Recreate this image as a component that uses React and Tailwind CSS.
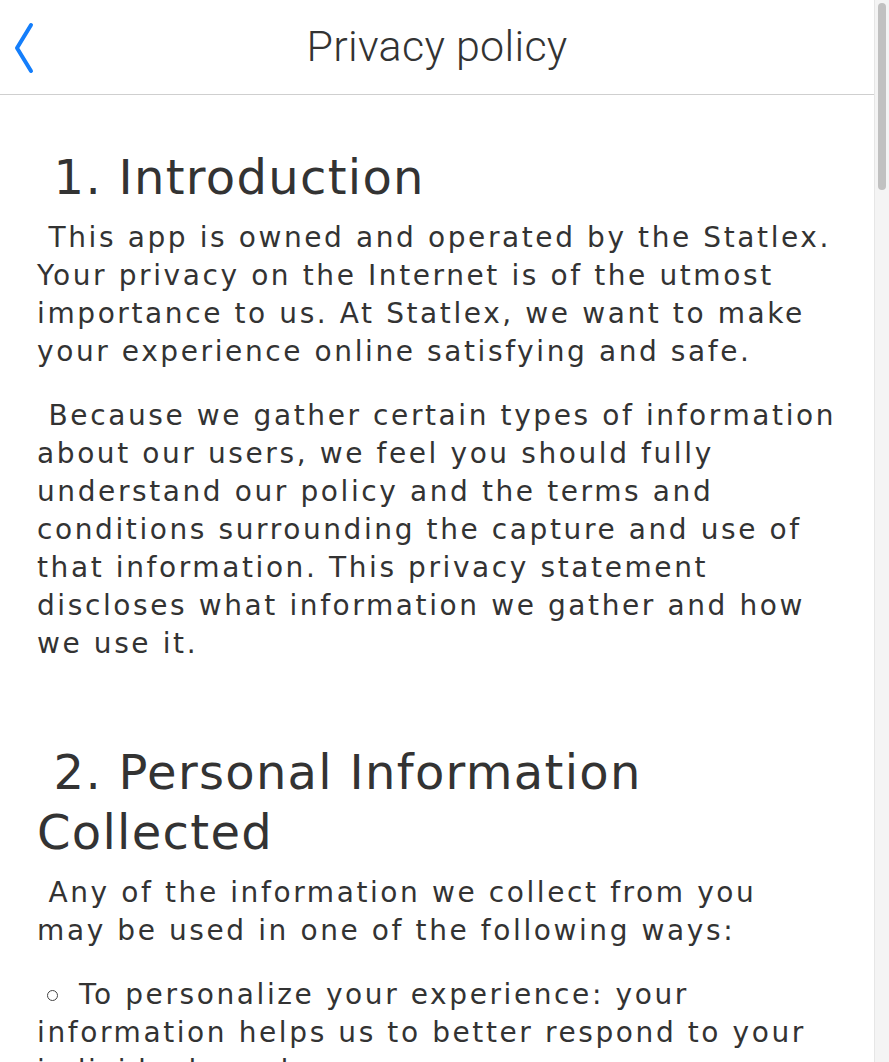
import React from 'react';

// Fake page scrollbar on the right edge
const Scrollbar = () => (
  <div className="w-[15px] h-full bg-[#f4f4f4] border-l border-[#e6e6e6] flex justify-center pt-[3px]">
    <div className="w-[8px] h-[187px] rounded-full bg-[#c1c1c1]" />
  </div>
);

const BackChevron = () => (
  <svg width="24" height="54" viewBox="0 0 24 54" fill="none">
    <path d="M17 4 L3 27 L17 50" stroke="#147EFB" strokeWidth="4" strokeLinecap="round" strokeLinejoin="round" />
  </svg>
);

const Heading = ({ children, className = '' }) => (
  <h2 className={`text-[48px] leading-[60px] tracking-[1.3px] text-[#333] ${className}`}>{'\u00a0'}{children}</h2>
);

const Para = ({ children, className = '', lead = true }) => (
  <p className={`text-[28px] leading-[38px] tracking-[2.6px] text-[#333] ${className}`}>{lead && '\u00a0'}{children}</p>
);

export default function App() {
  return (
    <div className="h-screen w-full flex bg-white overflow-hidden" style={{ fontFamily: '"DejaVu Sans", Verdana, sans-serif' }}>
      <div className="flex-1 min-w-0 flex flex-col overflow-hidden">
        {/* Header */}
        <header className="h-[95px] shrink-0 border-b border-[#cfcfcf] grid grid-cols-[1fr_auto_1fr] items-center">
          <div className="pl-[14px] pt-[1px] flex items-center">
            <BackChevron />
          </div>
          <h1 className="text-[43px] font-light text-[#333] tracking-[0.3px] pb-[1px]" style={{ fontFamily: 'Roboto, "Liberation Sans", sans-serif' }}>
            Privacy policy
          </h1>
          <div />
        </header>

        {/* Content */}
        <main className="px-[37px] pt-[52px]">
          <Heading>1. Introduction</Heading>
          <Para className="mt-[12px]">
            This app is owned and operated by the Statlex. Your privacy on the Internet is of the utmost importance to us. At Statlex, we want to make your experience online satisfying and safe.
          </Para>
          <Para className="mt-[26px]">
            Because we gather certain types of information about our users, we feel you should fully understand our policy and the terms and conditions surrounding the capture and use of that information. This privacy statement discloses what information we gather and how we use it.
          </Para>

          <Heading className="mt-[79px]">2. Personal Information Collected</Heading>
          <Para className="mt-[12px]">
            Any of the information we collect from you<br />may be used in one of the following ways:
          </Para>
          <Para className="mt-[26px]" lead={false}>
            <span className="inline-block align-middle w-[11px] h-[11px] rounded-full border border-[#444] ml-[10px] mr-[21px] -mt-[2px]" />
            To personalize your experience: your information helps us to better respond to your individual needs.
          </Para>
        </main>
      </div>
      <Scrollbar />
    </div>
  );
}
